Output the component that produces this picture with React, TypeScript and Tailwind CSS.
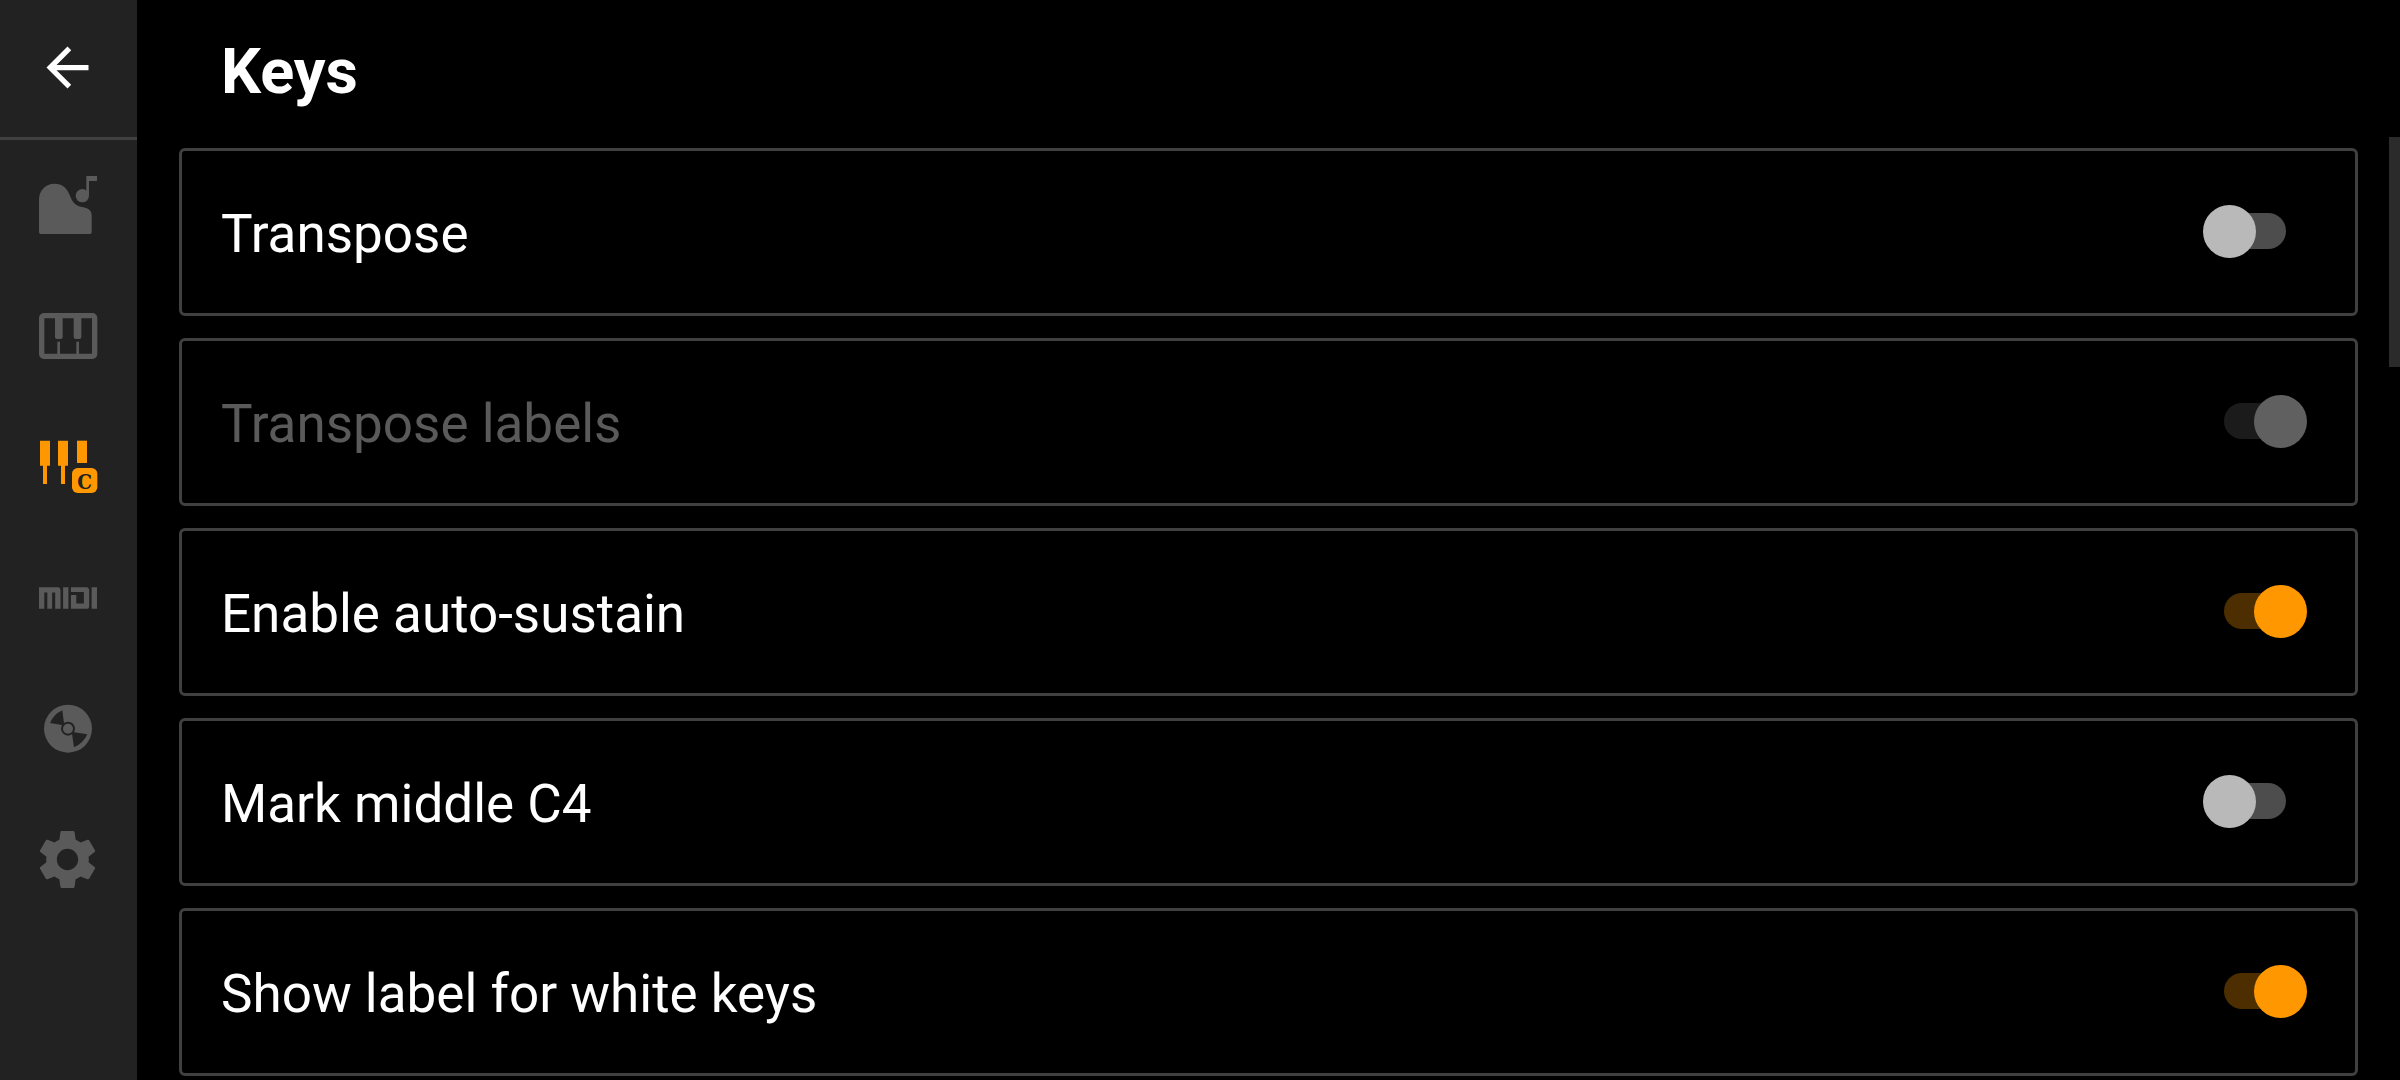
import React, { useState } from "react";
import { MdArrowBack, MdSettings } from "react-icons/md";
import { SiMidi } from "react-icons/si";

const PianoIcon = () => (
  <svg width="96" height="90" viewBox="0 0 288 270" fill="currentColor">
    <path d="M57 217V119C57 91 78 71 103 71C128 71 141 85 149 105C158 129 168 139 190 142C206 145 215 153 215 166V217Q215 222 210 222H62Q57 222 57 217Z" />
    <circle cx="187" cy="107" r="20" />
    <path d="M199 48H231V63H207V107H199Z" />
  </svg>
);

const KeyboardIcon = () => (
  <svg width="96" height="90" viewBox="0 3 288 270" fill="currentColor">
    <rect x="65" y="77" width="159" height="122" rx="7" fill="none" stroke="currentColor" strokeWidth="16" />
    <path d="M105 80H128V141Q128 147 122 147H111Q105 147 105 141Z" />
    <path d="M161 80H184V141Q184 147 178 147H167Q161 147 161 141Z" />
    <rect x="112" y="155" width="8" height="40" />
    <rect x="169" y="155" width="8" height="40" />
  </svg>
);

const KeyLabelsIcon = () => (
  <svg width="96" height="90" viewBox="0 6 288 270" fill="currentColor">
    <path d="M60 62H90V137H81V192H69V137H60Z" />
    <path d="M114 62H144V137H135V192H123V137H114Z" />
    <rect x="171" y="62" width="30" height="67" />
    <rect x="156" y="144" width="76" height="75" rx="17" />
    <text
      x="194"
      y="206"
      textAnchor="middle"
      fill="#222222"
      fontSize="62"
      className="font-['DejaVu_Serif_Condensed','DejaVu_Serif',serif] font-bold"
    >
      C
    </text>
  </svg>
);

const DiscIcon = () => (
  <svg width="96" height="90" viewBox="0 -18 288 270" fill="currentColor">
    <circle cx="144" cy="116" r="72" />
    <path d="M90 99Q101 73 127 61L133 108L130 106Z" fill="#222222" />
    <path d="M202 133Q190 160 162 172L155 124L158 126Z" fill="#222222" />
    <circle cx="144" cy="116" r="18" stroke="#222222" strokeWidth="6" />
  </svg>
);

const tabs = [
  { id: "piano", label: "Piano", icon: <PianoIcon /> },
  { id: "keyboard", label: "Keyboard", icon: <KeyboardIcon /> },
  { id: "keys", label: "Keys", icon: <KeyLabelsIcon /> },
  { id: "midi", label: "MIDI", icon: <SiMidi size={58} /> },
  { id: "recording", label: "Recording", icon: <DiscIcon /> },
  { id: "settings", label: "Settings", icon: <MdSettings size={71} /> },
];

const initialSettings = [
  { id: "transpose", label: "Transpose", on: false, disabled: false },
  { id: "transposeLabels", label: "Transpose labels", on: true, disabled: true },
  { id: "autoSustain", label: "Enable auto-sustain", on: true, disabled: false },
  { id: "middleC", label: "Mark middle C4", on: false, disabled: false },
  { id: "whiteKeys", label: "Show label for white keys", on: true, disabled: false },
];

type SwitchProps = {
  id: string;
  on: boolean;
  disabled: boolean;
  onChange: () => void;
};

const Switch = ({ id, on, disabled, onChange }: SwitchProps) => {
  let track = "bg-[#4d4d4d]";
  let thumb = "bg-[#b9b9b9]";
  if (disabled) {
    track = "bg-[#1b1b1b]";
    thumb = "bg-[#606060]";
  } else if (on) {
    track = "bg-[#4d2e00]";
    thumb = "bg-[#ff9800]";
  }

  return (
    <span className="grid w-[104px] shrink-0 items-center">
      <input
        id={id}
        type="checkbox"
        role="switch"
        checked={on}
        disabled={disabled}
        onChange={onChange}
        className="col-start-1 row-start-1 h-[53px] w-full appearance-none"
      />
      <span className={`pointer-events-none col-start-1 row-start-1 h-9 w-[62px] justify-self-center rounded-full ${track}`} />
      <span
        className={`pointer-events-none col-start-1 row-start-1 size-[53px] rounded-full ${thumb} ${
          on ? "justify-self-end" : "justify-self-start"
        }`}
      />
    </span>
  );
};

const App = () => {
  const [activeTab, setActiveTab] = useState("keys");
  const [settings, setSettings] = useState(initialSettings);

  const toggle = (id: string) => {
    setSettings(settings.map((s) => (s.id === id ? { ...s, on: !s.on } : s)));
  };

  return (
    <div className="flex min-h-screen bg-black font-[Roboto,sans-serif] text-white">
      <nav className="flex w-[137px] shrink-0 flex-col bg-[#222222]">
        <div className="border-b-3 border-[#404040]">
          <button type="button" aria-label="Back" className="flex h-[137px] w-full items-center justify-center pr-0.5 pb-0.5">
            <MdArrowBack size={63} />
          </button>
        </div>
        {tabs.map((tab) => (
          <button
            key={tab.id}
            type="button"
            aria-label={tab.label}
            onClick={() => setActiveTab(tab.id)}
            className={`flex h-[131px] w-full items-center justify-center pr-0.5 pb-0.5 ${
              tab.id === activeTab ? "text-[#ff9800]" : "text-[#5a5a5a]"
            }`}
          >
            {tab.icon}
          </button>
        ))}
      </nav>

      <main className="flex-1 pr-[31px] pl-[42px]">
        <h1 className="px-[42px] pt-9 pb-10 text-[63px] leading-[72px] font-bold">Keys</h1>
        <ul className="flex flex-col gap-[22px]">
          {settings.map((s) => (
            <li
              key={s.id}
              className="flex h-[168px] items-center justify-between rounded-md border-3 border-[#404040] pr-12 pb-0.5 pl-[39px]"
            >
              <label
                htmlFor={s.id}
                className={`flex-1 pt-1.5 text-[53px] leading-[62px] ${s.disabled ? "text-[#5a5a5a]" : "text-white"}`}
              >
                {s.label}
              </label>
              <Switch id={s.id} on={s.on} disabled={s.disabled} onChange={() => toggle(s.id)} />
            </li>
          ))}
        </ul>
      </main>

      <div className="w-[11px] shrink-0 pt-[137px]">
        <div className="h-[230px] bg-[#2b2b2b]" />
      </div>
    </div>
  );
};

export default App;
